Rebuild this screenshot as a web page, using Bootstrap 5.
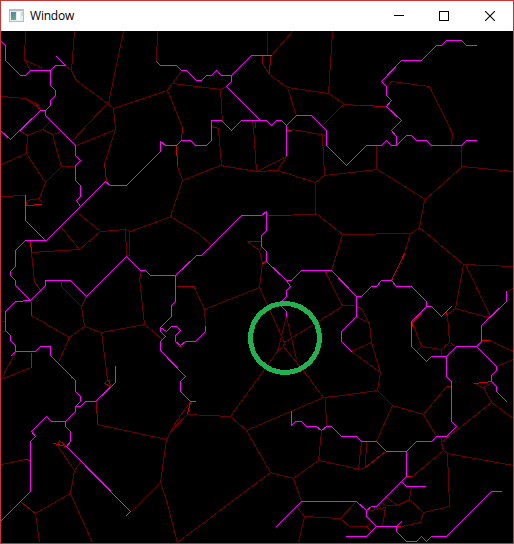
<!DOCTYPE html>
<html lang="en">
<head>
<meta charset="utf-8">
<title>Window</title>
<link href="https://cdn.jsdelivr.net/npm/bootstrap@5.3.0/dist/css/bootstrap.min.css" rel="stylesheet">
<style>
body{background:#000;overflow:hidden}
.app-window{width:514px;height:544px;border:1px solid #cb3434;background:#000}
.title-bar{height:30px;flex:none;background:#fff;color:#000;padding-left:8px}
.title-icon{margin-bottom:2px}
.title-text{font:12px/16px "Open Sans","Noto Sans",sans-serif;margin-left:6px;letter-spacing:-.2px}
.caption-btn{width:46px;height:30px;border:0;background:none;padding:0}
.caption-min{padding-left:2px}
.canvas-area{width:512px;height:512px;flex:none}
.cells,.trail{fill:none;shape-rendering:crispEdges;stroke-width:1}
.cells{stroke:#680000}
.mid{stroke:#960000}
.bright{stroke:#d00000}
.trail{stroke:#f0f}
</style>
<script src="https://cdn.jsdelivr.net/npm/bootstrap@5.3.0/dist/js/bootstrap.bundle.min.js"></script>
</head>
<body>
<div class="app-window d-flex flex-column">
<header class="title-bar d-flex align-items-center justify-content-between">
<div class="d-flex align-items-center">
<svg class="title-icon" width="15" height="13" viewBox="0 0 15 13" shape-rendering="crispEdges"><defs><linearGradient id="pane" x2=".4" y2="1"><stop stop-color="#477fae"/><stop offset="1" stop-color="#5fae7c"/></linearGradient></defs><path fill="#b9bdc1" d="M0 0h15v13H0z"/><path fill="#e9edf0" d="M1 2h13v10H1z"/><path fill="url(#pane)" d="M2 3h5v8H2z"/><path fill="#fff" d="M8 3h3v8H8z"/><path fill="#c5dfd7" d="M12 3h2v4h-2z"/></svg>
<span class="title-text">Window</span>
</div>
<div class="d-flex">
<button class="caption-btn caption-min d-flex align-items-center justify-content-center" aria-label="Minimize"><svg width="10" height="10" shape-rendering="crispEdges"><path d="M0 4h10v1H0z"/></svg></button>
<button class="caption-btn d-flex align-items-center justify-content-center" aria-label="Maximize"><svg width="10" height="10" shape-rendering="crispEdges"><path d="M.5.5h9v9h-9z" fill="none" stroke="#000"/></svg></button>
<button class="caption-btn d-flex align-items-center justify-content-center" aria-label="Close"><svg width="10" height="10"><path d="M0 0l10 10M10 0L0 10" fill="none" stroke="#000" stroke-width="1.1"/></svg></button>
</div>
</header>
<svg class="canvas-area" viewBox="1 31 512 512">
<g transform="translate(.5 .5)">
<path class="cells" d="M25,31L24,59L30,70M25,60L41,67V70M74,31L71,70M65,65L71,70L76,80L107,103L113,108L167,90M123,31L108,103M113,108L115,129L76,145M107,103L72,140M115,129L104,163
M1,96L25,98L39,105L40,110M25,98L39,108M27,135L42,129L52,134L61,131M42,129L50,121M52,134L61,166H75M61,166L45,182L39,198L27,200M27,135L26,153L1,164M26,153L45,182M1,196L25,195M39,198L41,203M157,31L156,61
M167,90L172,83L220,89L226,86M172,83L181,71M167,90L172,102L182,127M177,166L182,180L220,165L256,171L277,170L315,182L324,175L342,173L377,169L425,199L462,166L513,171M182,180L175,201L170,216L198,233L211,245
M220,89L222,122M218,128L221,165M252,121L253,127L256,171M257,171L286,156L277,170M267,31V55M292,31L271,55M262,63L269,74L287,87L328,93L332,31M287,87L296,115M328,93L342,102L344,104M340,107L322,125M344,104L340,107M344,104L360,105M292,129L326,135M322,136L324,175M315,182V213
M386,86L391,81L429,86L452,133L451,145M376,145V169M461,145V166M425,199L424,200L419,227L410,233L341,234M315,213L317,214L342,234L331,270M410,233L404,253M419,227L463,264L513,266M463,264L455,308L488,317M466,266L489,314L488,317M455,308L447,314L449,342L441,349L421,346L412,322M421,346L416,351M441,349V356M449,342L455,346
M506,291L513,288M489,340L513,351M496,366L513,359M340,305H356M361,308L369,323L371,342L351,351L380,372L371,342M356,316L369,323M267,215L317,214M247,241L259,250M261,247L259,250L262,263L259,287L204,309L194,287M204,309L205,326M259,287L284,342L283,346L277,351L286,316L296,359M283,346L308,377M342,306L284,342M326,274L342,305M277,351L230,416L187,414L170,432M190,401L173,425
M283,346L303,370L323,397L246,430L230,416M323,397L342,395L377,390L380,371M325,398L326,426M246,430L270,472L177,542L166,500L160,482M270,472L293,478L318,460L321,431M318,460L342,465L359,469L365,467M361,441L358,469M366,441L365,467M293,478L301,501M297,507L304,516L340,518M304,516L298,542M355,502L340,518L349,526H366L370,522M366,511L385,507L382,526M385,505H397L409,499L411,487M385,496L397,505M381,502L385,505
M409,499L423,512L449,506L447,453L443,450L412,476M423,512L420,522L397,527M447,453L513,465M441,437V442L443,450M441,442L491,402L483,387L492,382M474,383L483,387M491,402L513,418M377,390L392,405L423,414L446,386M392,405L376,441M423,414L436,436
M1,379L4,372L15,352M1,379L23,370L31,367M101,332L106,370L107,380M97,424L166,439L172,428L187,414M166,439L160,482L131,511M1,464L25,459M35,513L70,493L92,542M35,513L39,542M70,493L74,470L57,445M74,470L81,461
M77,212L100,231L125,229L130,231L171,216V210M125,228L126,255H129V231M100,231L79,249L61,227M79,249L31,252L34,281L40,290M31,315L69,337L58,362M69,337L84,326L81,306L61,286M81,306L86,296M84,326L101,332L144,324L139,278M144,324L161,338V341M1,321H5M1,331H5"/>
<path class="cells mid" d="M104,163L106,181M21,131L27,135M35,103L40,110M182,127L181,140M211,126L218,128M255,121V127M269,74L270,55M262,55V63M360,105L386,106M247,241H261M176,286H194M325,270L326,274M267,215H289M356,306L361,308M385,451L365,467M366,526L371,531M71,375V378M96,402L97,424M21,502L35,513M57,445L59,440L66,446M61,286V281M139,278L141,271M107,380L104,383L110,386L109,380H107M446,386H451M489,314L487,320M26,205V200M34,281L40,290"/>
<path class="cells bright" d="M26,205L42,204M26,135H27M176,145L177,166M286,130H291M404,253L391,280M446,310V314M477,346L482,340H489M262,263L266,261M187,414L190,401M406,476H411M474,383L492,381M31,352V367M25,459L30,460M53,443L66,446M30,241L31,252M31,301V315M178,346H181M412,326V322L426,307M382,526H383M397,526H400"/>
<path class="trail" stroke-linecap="square" d="M1,41L5,45V60L20,75H25L30,70H50V85L55,90V95L50,100V105L45,110H40L10,139L1,131M50,70L55,65H65L56,56M45,110V115L75,145V155L80,160L75,165V180L80,185V196L76,200L80,206
M156,61L160,65H176L181,70H186L196,80H201L206,75H211L216,70L221,75H231L251,55H271M231,75V81L226,86L260,120
M346,165L326,145V130L311,115H296L286,125L281,120H276L271,125L266,120H241L231,130L221,120H211V140L206,145H195L190,140H181L176,145H165L160,141V151L126,185H110L105,181L46,240H25L15,250V266L10,271V275L15,280V285L30,300L45,285V280H70L86,296L126,256L140,270H145L150,275H175L196,255H201L236,220L241,215H261L266,211V230L261,235V246L266,251V261L286,280H291L301,270H331L356,296H361L371,286H376L381,280H391L396,286H411L426,301V306H431L441,316L451,306
M286,125V155M346,165L366,145H381L386,140L391,145H396L406,135H411L416,140H426L431,145H461L466,140H476M396,145V136L391,130L401,120L386,106L391,100L386,95V86L381,81L401,60H421L436,45H441L446,40H461L466,45H476
M25,195V220L45,240M286,280L290,286L286,290V296L281,301V306L286,311V316M356,296V316L341,331V341L351,351
M426,306L411,321V346L426,361L431,356H446V376L451,381V421L456,426L446,436H436L431,441H416L406,451H386L376,441H361L356,436H341L331,426H326L321,430L316,426H306L301,421H295L291,425V411
M446,356L456,346H476L481,341V325L506,301V291M476,346L496,366V370L491,375V381L496,386V391L506,401
M175,275V301L171,305V316L160,327L166,331L171,326H176L180,330L175,335V341L180,345L185,341H195L205,331V326M160,327V331L165,336L160,341V350L185,376L180,381V391L190,401H195
M30,300L15,301L5,311V330L10,335V340L15,345V351L11,355M15,351H35L40,346H50V355L75,380V391L80,396V401L75,406H80L85,401H95L115,382V366M75,406V411L65,421H51L46,416L31,431L35,436L30,441V491L1,520M65,421V426L70,431V441L66,446L130,511L126,515
M406,451V476L376,506H371L366,510V516L376,526H396L401,521M401,481L406,486H425M376,526L366,536H346M366,510L356,501H301L276,526M396,526V531L406,541H416L421,536L426,541L431,536H446L491,491H501"/>
</g>
<circle cx="285" cy="338" r="34.5" fill="none" stroke="#22b14c" stroke-width="5" shape-rendering="crispEdges"/>
</svg>
</div>
</body>
</html>
